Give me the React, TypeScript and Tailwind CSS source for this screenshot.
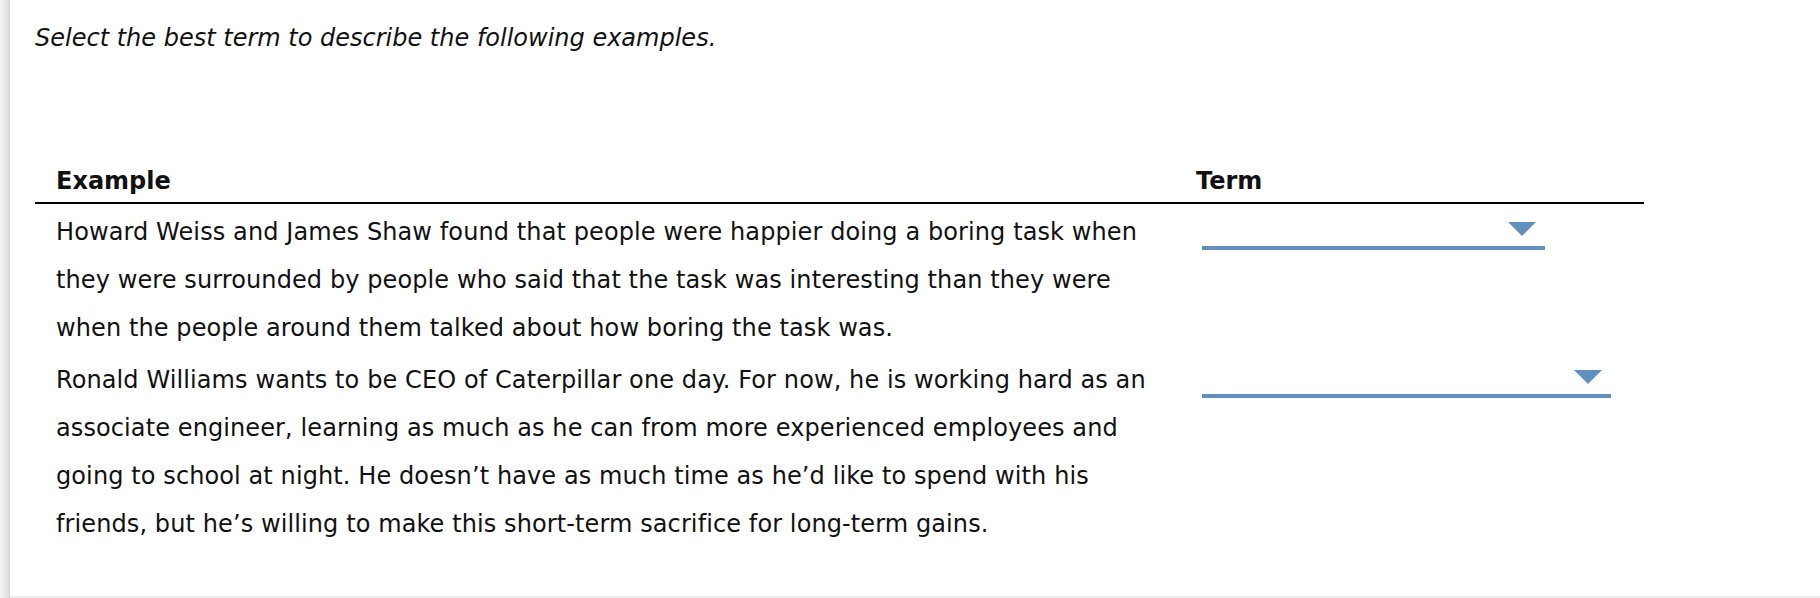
import React from 'react';

const rows = [
  {
    lines: [
      'Howard Weiss and James Shaw found that people were happier doing a boring task when',
      'they were surrounded by people who said that the task was interesting than they were',
      'when the people around them talked about how boring the task was.',
    ],
    selectWidth: 'w-[343px]',
  },
  {
    lines: [
      'Ronald Williams wants to be CEO of Caterpillar one day. For now, he is working hard as an',
      'associate engineer, learning as much as he can from more experienced employees and',
      'going to school at night. He doesn\u2019t have as much time as he\u2019d like to spend with his',
      'friends, but he\u2019s willing to make this short-term sacrifice for long-term gains.',
    ],
    selectWidth: 'w-[409px]',
  },
];

const Dropdown: React.FC<{ width: string }> = ({ width }) => (
  <div className={`${width} h-[42px] border-b-4 border-[#6190c0] flex justify-end pt-[14px] pr-[9px]`}>
    <div className="w-0 h-0 border-l-[14px] border-r-[14px] border-t-[14px] border-l-transparent border-r-transparent border-t-[#6190c0]" />
  </div>
);

const App: React.FC = () => {
  return (
    <div className="flex h-[598px] w-[1820px] overflow-hidden bg-white text-[24px] text-[#111] font-['DejaVu_Sans',Verdana,sans-serif]">
      <div className="w-[10px] shrink-0 bg-linear-to-r from-[#f6f6f6] to-[#d8d8d8]" />
      <div className="flex-1 border-b-2 border-[#ededed]">
        <p className="pl-[25px] pt-6 italic leading-[28px]">Select the best term to describe the following examples.</p>

        <div className="ml-[25px] mt-[115px] w-[1609px]">
          <div className="flex border-b-2 border-black pb-[7px] font-bold leading-[28px]">
            <div className="w-[1140px] shrink-0 pl-[21px]">Example</div>
            <div className="pl-[21px]">Term</div>
          </div>

          {rows.map((row, i) => (
            <div key={i} className="flex pt-1">
              <div className="w-[1140px] shrink-0 pl-[21px] leading-[48px] tracking-[0.1px] whitespace-nowrap">
                {row.lines.map((line, j) => (
                  <div key={j}>{line}</div>
                ))}
              </div>
              <div className="pl-[27px]">
                <Dropdown width={row.selectWidth} />
              </div>
            </div>
          ))}
        </div>
      </div>
    </div>
  );
};

export default App;
